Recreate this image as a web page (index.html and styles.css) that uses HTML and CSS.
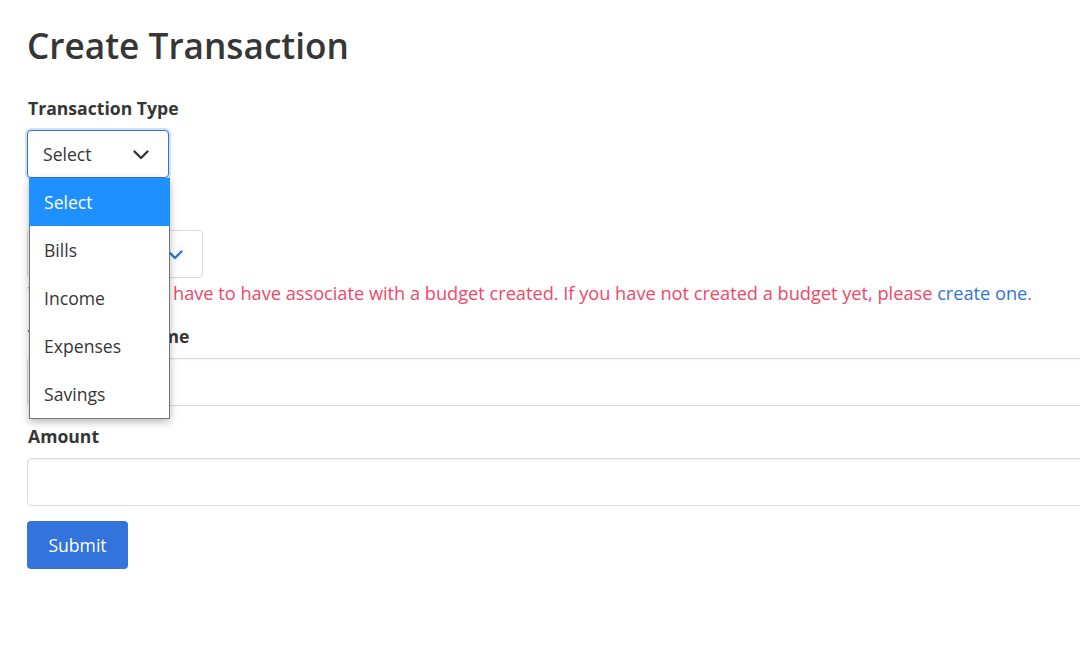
FILE: index.html
```html
<!DOCTYPE html>
<html lang="en">
<head>
<meta charset="utf-8">
<title>Create Transaction</title>
<link rel="stylesheet" href="styles.css">
</head>
<body>
<main class="page">
  <h1 class="title">Create Transaction</h1>
  <form class="form">
    <div class="field">
      <label class="label">Transaction Type</label>
      <div class="select-wrap">
        <div class="select select-type is-focused">
          <span class="select-text">Select</span>
          <svg class="chev" viewBox="0 0 16 10" width="16" height="10"><polyline points="1.5,1.5 8,8 14.5,1.5" fill="none" stroke="#363636" stroke-width="2.4" stroke-linecap="round" stroke-linejoin="round"/></svg>
        </div>
        <ul class="options">
          <li class="option is-active">Select</li>
          <li class="option">Bills</li>
          <li class="option">Income</li>
          <li class="option">Expenses</li>
          <li class="option">Savings</li>
        </ul>
      </div>
    </div>
    <div class="field">
      <label class="label">Budget</label>
      <div class="select select-budget">
        <span class="select-text">Select</span>
        <svg class="chev" viewBox="0 0 16 10" width="16" height="10"><polyline points="1.5,1.5 8,8 14.5,1.5" fill="none" stroke="#3273dc" stroke-width="2.4" stroke-linecap="round" stroke-linejoin="round"/></svg>
      </div>
      <p class="help">Your transaction have to have associate with a budget created. If you have not created a budget yet, please <a href="#" class="link">create one</a>.</p>
    </div>
    <div class="field field-after-help">
      <label class="label">Transaction Name</label>
      <input class="input" type="text">
    </div>
    <div class="field">
      <label class="label">Amount</label>
      <input class="input" type="text">
    </div>
    <button class="button" type="button">Submit</button>
  </form>
</main>
</body>
</html>
```
FILE: styles.css
```css
html, body {
  margin: 0;
  padding: 0;
  background: #fff;
  overflow: hidden;
}
body {
  font-family: "Open Sans", "Noto Sans", "DejaVu Sans", sans-serif;
  color: #363636;
  font-size: 18px;
}
.page {
  padding: 20px 0 0 27px;
  width: 1100px;
}
.title {
  margin: 0 0 26px;
  font-size: 35.2px;
  font-weight: 600;
  line-height: 50px;
  color: #363636;
}
.form {
  display: flex;
  flex-direction: column;
  align-items: flex-start;
}
.field {
  display: flex;
  flex-direction: column;
  align-items: flex-start;
  margin-bottom: 18px;
  width: 100%;
}
.field-after-help {
  margin-top: 2px;
}
.label {
  display: block;
  font-size: 17.6px;
  font-weight: 700;
  line-height: 24px;
  margin: 0 0 10px 1px;
  color: #363636;
}
.select-wrap {
  position: relative;
}
.select {
  box-sizing: border-box;
  height: 48px;
  border: 1px solid #dbdbdb;
  border-radius: 4px;
  background: #fff;
  display: flex;
  align-items: center;
  justify-content: space-between;
  padding: 0 19px 0 15px;
  font-size: 17.6px;
  color: #363636;
}
.select-type { width: 142px; }
.select-budget { width: 176px; }
.select.is-focused {
  border-color: #3273dc;
  box-shadow: 0 0 0 2px rgba(50, 115, 220, 0.22);
}
.chev {
  display: block;
  margin-top: 1px;
}
.options {
  position: absolute;
  top: 48px;
  left: 2px;
  width: 141px;
  box-sizing: border-box;
  margin: 0;
  padding: 0;
  list-style: none;
  background: #fff;
  border: 1px solid #767676;
  border-top: none;
  box-shadow: 0 3px 8px rgba(0, 0, 0, 0.28);
  z-index: 10;
}
.option {
  height: 48px;
  line-height: 48px;
  padding-left: 14px;
  font-size: 17.6px;
  color: #363636;
}
.option.is-active {
  background: #1e90ff;
  color: #fff;
  margin: 0 -1px;
  padding-left: 15px;
}
.help {
  margin: 4px 0 0 1px;
  font-size: 18.2px;
  line-height: 22px;
  color: #f14668;
  white-space: nowrap;
}
.link {
  color: #3273dc;
  text-decoration: none;
}
.input {
  box-sizing: border-box;
  width: 100%;
  height: 48px;
  border: 1px solid #dbdbdb;
  border-radius: 4px;
  box-shadow: inset 0 1px 2px rgba(10, 10, 10, 0.05);
  font: inherit;
  padding: 0 15px;
  margin: 0;
}
.button {
  margin-top: -3px;
  box-sizing: border-box;
  height: 48px;
  width: 101px;
  padding: 0;
  border: none;
  border-radius: 4px;
  background: #3273dc;
  color: #fff;
  font-family: inherit;
  font-size: 17.6px;
  cursor: pointer;
}
```
